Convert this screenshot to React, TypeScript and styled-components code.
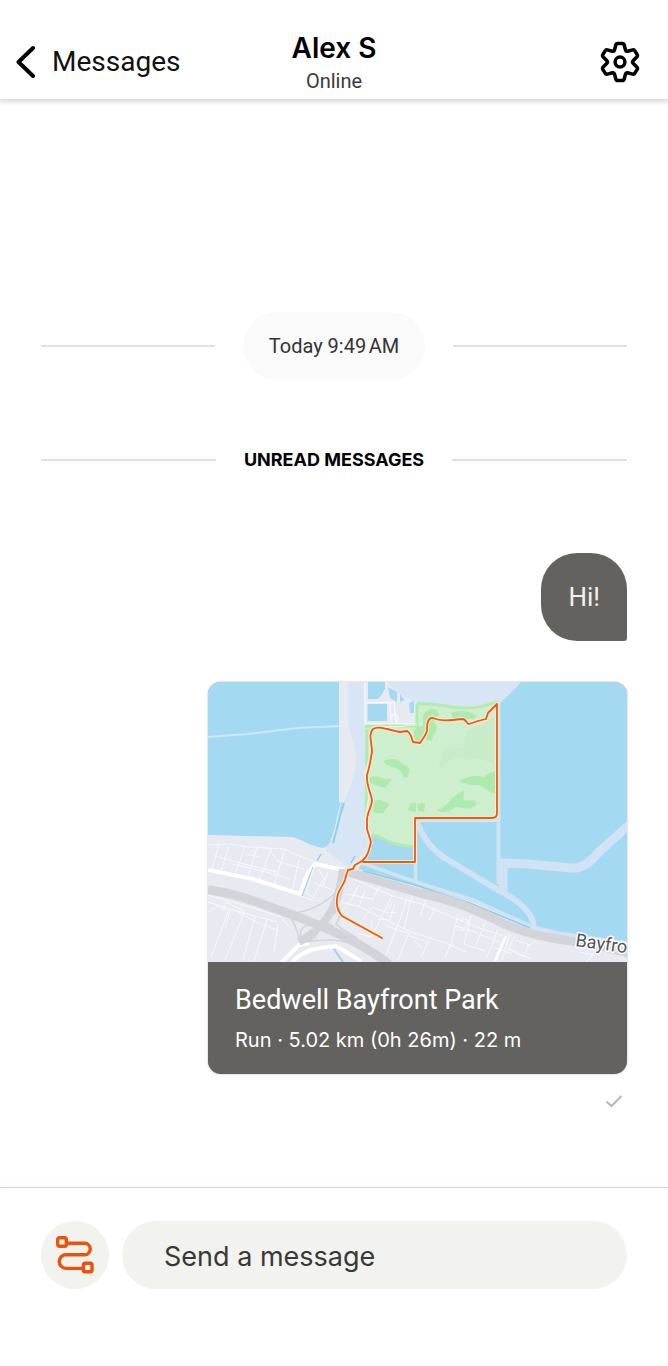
import React from "react";
import styled, { createGlobalStyle } from "styled-components";

const GlobalStyle = createGlobalStyle`
  *, *::before, *::after { box-sizing: border-box; }
  body {
    margin: 0;
    background: #fff;
    color: #000;
    font-family: Roboto, Inter, "Liberation Sans", sans-serif;
  }
  button, input { font-family: inherit; }
`;

const Screen = styled.div`
  display: flex;
  flex-direction: column;
  min-height: 100vh;
`;

const Header = styled.header`
  display: grid;
  grid-template-columns: 1fr auto 1fr;
  align-items: center;
  padding: 32px 16px 4px;
  background: #fff;
  box-shadow: 0 1px 6px 1px rgba(0, 0, 0, 0.2);
`;

const BackLink = styled.a`
  display: flex;
  align-items: center;
  gap: 16px;
  justify-self: start;
  margin-bottom: 4px;
  color: #111;
  font-size: 28px;
  line-height: 32px;
  text-decoration: none;
`;

const Person = styled.div`
  text-align: center;
`;

const Name = styled.h1`
  margin: 0;
  font-family: Inter, sans-serif;
  font-size: 28px;
  font-weight: 600;
  line-height: 32px;
`;

const Status = styled.p`
  margin: 3px 0 0;
  color: #3a3a3a;
  font-size: 20px;
  line-height: 28px;
`;

const IconButton = styled.button`
  display: flex;
  justify-self: end;
  margin: 0 0 4px;
  padding: 0 12px;
  border: 0;
  background: none;
  cursor: pointer;
`;

const Thread = styled.main`
  display: flex;
  flex: 1;
  flex-direction: column;
  padding: 213px 41px 76px;
`;

const Divider = styled.div`
  display: flex;
  align-items: center;
  gap: 28px;

  &::before, &::after {
    content: "";
    flex: 1;
    height: 2px;
    background: #e0e0e0;
  }
`;

const DatePill = styled.time`
  padding: 20px 26px;
  border-radius: 34px;
  background: #fafafa;
  color: #333;
  font-size: 20px;
  line-height: 28px;
`;

const UnreadLabel = styled.h2`
  margin: 68px 0;
  font-family: Inter, sans-serif;
  font-size: 18px;
  font-weight: 700;
  line-height: 24px;
`;

const Bubble = styled.p`
  align-self: flex-end;
  margin: 13px 0 0;
  padding: 28px 27px;
  border-radius: 36px 36px 3px 36px;
  background: #64625e;
  color: #f2f2f0;
  font-size: 26px;
  line-height: 32px;
`;

const ActivityCard = styled.a`
  align-self: flex-end;
  width: 419px;
  max-width: 100%;
  margin-top: 41px;
  overflow: hidden;
  border-radius: 13px;
  background: #64625e;
  box-shadow: 0 0 2px rgba(0, 0, 0, 0.35);
  color: #fff;
  text-decoration: none;
`;

const MapArt = styled.svg`
  display: block;
  width: 100%;
  height: auto;
`;

const ActivityText = styled.div`
  padding: 20px 27px 18px;
`;

const ActivityTitle = styled.h3`
  margin: 0;
  font-size: 27px;
  font-weight: 400;
  line-height: 36px;
`;

const ActivityStats = styled.p`
  margin: 6px 0 0;
  font-family: Inter, sans-serif;
  font-size: 20px;
  line-height: 32px;
`;

const SentMark = styled.svg`
  align-self: flex-end;
  margin: 20px 4px 0 0;
`;

const Composer = styled.form`
  display: flex;
  gap: 13px;
  padding: 33px 41px 77px;
  border-top: 1px solid #d6d6d6;
  box-shadow: 0 -2px 12px rgba(0, 0, 0, 0.03);
`;

const RouteButton = styled.button`
  display: grid;
  place-items: center;
  flex: none;
  width: 68px;
  height: 68px;
  padding: 0;
  border: 0;
  border-radius: 50%;
  background: #f2f2ef;
  cursor: pointer;
`;

const MessageInput = styled.input`
  flex: 1;
  min-width: 0;
  height: 68px;
  padding: 2px 42px 0;
  border: 0;
  border-radius: 34px;
  background: #f2f2ef;
  color: #333;
  font-family: Inter, sans-serif;
  font-size: 27px;

  &::placeholder { color: #383836; opacity: 1; }
`;

function BackIcon() {
  return (
    <svg width="20" height="34" viewBox="0 0 20 34" fill="none" stroke="#000" strokeWidth="4" strokeLinecap="round" strokeLinejoin="round" aria-hidden="true">
      <path d="M17 3L2.5 17L17 31" />
    </svg>
  );
}

function GearIcon() {
  return (
    <svg width="40" height="42" viewBox="-20 -21 40 42" fill="none" stroke="#000" strokeWidth="3.5" strokeLinejoin="round" aria-hidden="true">
      <path d="M-5.5 -12L-4.2 -17Q-3.8 -18.5 -2.3 -18.5H2.3Q3.8 -18.5 4.2 -17L5.5 -12Q5.9 -10.4 7.6 -10.8L12.6 -12.1Q14.1 -12.5 14.9 -11.2L17.2 -7.3Q17.9 -6 16.8 -4.9L13.1 -1.2Q12 0 13.1 1.2L16.8 4.9Q17.9 6 17.2 7.3L14.9 11.2Q14.1 12.5 12.6 12.1L7.6 10.8Q5.9 10.4 5.5 12L4.2 17Q3.8 18.5 2.3 18.5H-2.3Q-3.8 18.5 -4.2 17L-5.5 12Q-5.9 10.4 -7.6 10.8L-12.6 12.1Q-14.1 12.5 -14.9 11.2L-17.2 7.3Q-17.9 6 -16.8 4.9L-13.1 1.2Q-12 0 -13.1 -1.2L-16.8 -4.9Q-17.9 -6 -17.2 -7.3L-14.9 -11.2Q-14.1 -12.5 -12.6 -12.1L-7.6 -10.8Q-5.9 -10.4 -5.5 -12Z" />
      <circle r="4.9" />
    </svg>
  );
}

function RouteIcon() {
  return (
    <svg width="40" height="40" viewBox="0 0 40 40" fill="none" stroke="#ec520b" strokeWidth="3.4" aria-hidden="true">
      <rect x="2.700" y="2.700" width="8.600" height="8.600" rx="1.800" />
      <rect x="28.400" y="28.200" width="8.600" height="8.600" rx="1.800" />
      <path d="M12 8.300H29.500A5.700 5.700 0 0 1 29.500 19.800H11A6.800 6.800 0 0 0 11 33.400H28" />
    </svg>
  );
}

const RUN_PATH =
  "M174 256L134 234Q128 227 129 218C129 209 134 206 137 198Q138 193 140 188L145 187L147 183L154 179C161 173 161 167 163 160L159 147L159 138C159 130 164 125 164 118C162 108 158 102 159 93C162 84 162 80 164 70C164 61 160 52 165 47C170 44 174 46 179 47C188 49 190 50 192 50L199 49C203 51 203 54 205 60L212 61C214 58 217 55 219 49C219 41 220 35 225 36C232 39 239 39 254 37C259 37 258 42 261 42L270 39L278 37L280 31L289 22V131Q289 136 284 136H207V180H155";

function RouteMap() {
  return (
    <MapArt viewBox="0 0 419 280" role="img" aria-label="Route map">
      <rect width="419" height="280" fill="#e8eaf2" />

      {/* water and tidal flats */}
      <path d="M140 0H157V100L160 168L140 185L117 168L126 145L136 120C144 102 148 88 148 73C146 56 140 50 140 35Z" fill="#d8e5f5" />
      <path d="M0 0H131V120L136 121C131 130 129 140 126 148C123 159 120 166 114 166C100 163 93 157 84 155L0 153Z" fill="#a3daf1" />
      <path d="M0 55L40 52L90 46L131 44" fill="none" stroke="#d3e4f5" strokeWidth="2" />
      <path d="M133 121C130 130 128 146 124 158" fill="none" stroke="#e1ebf7" strokeWidth="1" />
      <path d="M136 121L132 134L128 150L125 161" fill="none" stroke="#8ed0e6" strokeWidth="2" />
      <path d="M179 0H312L292 20L255 25L209 21L197 15L184 6Z" fill="#d8e5f5" />
      <path d="M160 0H177V7L173 14L170 17H160ZM159.500 22H179V39H159.500ZM180 5L189 10V20L182 16ZM192 12L197 18L192 20ZM201 21L206 19V31L202 31Z" fill="#a3daf1" />
      <path d="M157 0V43M157 20.500H186L188 42M182 21L183 41M183 36Q188 28 190 37L188 42M157 42H208" fill="none" stroke="#f7f8fb" strokeWidth="1.300" />
      <path d="M312 0H419V259L362 254L330 246L265 220L209 203L150 187L162 170V140H290V22Z" fill="#a3daf1" />
      <g fill="none" stroke="#d0e2f4">
        <path d="M290.500 20V202" strokeWidth="4" />
        <path d="M207.500 137V200" strokeWidth="3.500" />
        <path d="M207 138H289" strokeWidth="3" />
        <path d="M209 140C216 158 225 169 240 178L285 205C302 214 325 226 326 246" strokeWidth="6" />
        <path d="M292 181L320 182L363 186C378 187 385 176 392 169L421 143" strokeWidth="9" strokeLinejoin="round" />
        <path d="M295 180V210" strokeWidth="9" />
        <path d="M154 181L208 200L265 218L325 245L350 251L419 261" strokeWidth="3.500" />
      </g>
      <path d="M312 0L290 22" stroke="#d8e5f5" strokeWidth="2" />
      <path d="M155 189L207 203L262 221L322 246M109 179L113 172M143 181L147 174" fill="none" stroke="#8fcde5" strokeWidth="1.500" />

      {/* park */}
      <path d="M157 43H209V20C228 18 240 25 255 25C269 25 282 22 290 19V136H207V166C197 164 194 162 188 161C178 162 172 153 162 153L158 138Z" fill="#cdefcd" />
      <path d="M209 22C228 20 240 26 255 26C269 27 280 23 289 20M157 44H209V22M159 47L158 136M164 153C173 153 179 161 188 162L205 165" fill="none" stroke="#b3eab2" strokeWidth="3" />
      <path d="M258 50L286 36V82L270 76L259 78C255 71 247 76 240 80L230 88L235 65L255 66Z" fill="#c8ebc9" />
      <g fill="#aee9ad">
        <path d="M175 80C180 76 190 76 194 81C200 86 204 84 200 95L195 96C196 85 185 88 175 80Z" />
        <path d="M162 95C172 93 174 98 184 97L178 105C174 107 168 102 162 101Z" />
        <path d="M165 120C171 115 176 119 181 122L175 131H166Z" />
        <path d="M215 33C222 23 231 27 231 34L224 36L229 46L223 59L217 57L210 61Q202 52 209 45L215 44Z" />
        <path d="M243 31C252 27 264 30 269 34L265 37H245Z" />
        <path d="M251 99C260 94 270 93 276 95C280 91 284 90 288 89V112C280 111 277 104 270 103C265 103 259 103 251 99Z" />
        <path d="M229 127C238 129 242 113 256 109C256 117 251 120 266 118L269 121C263 131 253 124 247 125C240 131 233 132 229 127Z" />
        <path d="M209 122L217 121L216 130L210 129ZM202 122L208 120V130L200 128Z" />
      </g>
      <path d="M209 43H199C193 47 174 42 165 47C160 52 164 68 161 78L157 91L161 115L157 137L161 157" fill="none" stroke="#eaf7e9" strokeWidth="1.200" />

      {/* local streets */}
      <g fill="none" stroke="#f9f9fc" strokeWidth="1">
        <path d="M0 163L22 162L42 165L75 167L108 181M11 162L4 187M21 164L13 189M37 164L28 190M49 166L40 195M63 167L52 197M76 170L66 203M91 177L84 211M7 174L40 183L69 190M38 172L51 175M25 182L46 187M47 187L83 197M68 179L96 187M62 169L71 180" />
        <path d="M0 213L35 223L73 235L80 244M0 220L25 228L69 240M0 230L9 224L22 229L17 246M20 230L3 275M36 231L17 278M47 235L35 278M59 238L46 279M70 242L66 270M30 230L50 241L69 248M14 228L18 220L36 229" />
        <path d="M105 188L98 211L116 222L126 209M111 188L116 196L106 214M120 190L115 204L124 208M107 201L115 205M93 214L106 219" />
        <path d="M145 197L182 213L213 222L274 247L295 254M134 220L152 225L178 238L203 250L235 260L258 270M135 228L142 220L151 203M151 225L157 208M164 218L174 200M184 214L175 232L165 252M199 216L194 232L176 278M155 238L164 225L180 231L189 230M170 237L182 238L187 222M178 244L201 251L190 278M164 238L163 255L149 251M202 254L220 260L213 276M204 213L196 247M213 266L206 258M139 212L164 217M181 226L184 220" />
        <path d="M218 218L212 234M228 225L221 238M250 232L244 258L237 276M263 234L256 262L277 269M277 241L267 265M290 247L279 276M302 252L294 278M307 254L301 266L316 275L321 262M307 258L322 263L328 258M248 244L270 251L259 248M253 236L262 239L254 249L248 247M286 265L304 272M273 253L292 260M300 267L323 277M371 270L385 273L378 280" />
      </g>

      {/* arterial roads */}
      <g fill="none" stroke="#fff" strokeWidth="4" strokeLinejoin="round">
        <path d="M0 188L45 197L92 212L99 192L107 182L136 188" />
        <path d="M73 281L91 263L101 261M84 280C97 267 109 266 128 264L153 279" />
        <path d="M298 254L287 279" strokeWidth="2.500" />
      </g>
      <path d="M94 214L105 185" stroke="#9dcfe2" strokeWidth="1" />
      <g fill="none" stroke="#d2d4da">
        <path d="M0 208C30 211 58 224 85 233C116 245 146 256 181 282" strokeWidth="9" />
        <path d="M135 187C132 211 127 240 91 260" strokeWidth="8" />
        <path d="M140 190L212 211C253 220 271 230 299 243C326 255 355 258 384 262L421 271" strokeWidth="9" />
        <path d="M73 232C99 232 117 222 129 209M81 235C89 240 88 253 94 260C89 248 96 241 105 244M126 232C133 223 133 235 128 242C136 251 152 252 157 270M109 247C110 258 103 257 96 260C120 257 136 255 157 269M126 244C114 242 119 229 127 229" strokeWidth="1.500" />
      </g>
      <path d="M126 267L135 280" stroke="#9dd2e9" strokeWidth="2" />

      {/* recorded run */}
      <g fill="none" strokeLinejoin="round" strokeLinecap="round">
        <path d={RUN_PATH} stroke="#fbecc9" strokeWidth="4" />
        <path d={RUN_PATH} stroke="#e65a1c" strokeWidth="1.800" />
      </g>

      <text x="367" y="264" transform="rotate(8 367 264)" fontFamily="Roboto, sans-serif" fontSize="18" fill="#555" stroke="#fff" strokeWidth="3" strokeLinejoin="round" paintOrder="stroke">Bayfro</text>
    </MapArt>
  );
}

export default function App() {
  return (
    <>
      <GlobalStyle />
      <Screen>
        <Header>
          <BackLink href="#messages">
            <BackIcon />
            Messages
          </BackLink>
          <Person>
            <Name>Alex S</Name>
            <Status>Online</Status>
          </Person>
          <IconButton type="button" aria-label="Settings">
            <GearIcon />
          </IconButton>
        </Header>

        <Thread>
          <Divider>
            <DatePill>Today 9:49{"\u202f"}AM</DatePill>
          </Divider>
          <Divider>
            <UnreadLabel>UNREAD MESSAGES</UnreadLabel>
          </Divider>
          <Bubble>Hi!</Bubble>
          <ActivityCard href="#activity">
            <RouteMap />
            <ActivityText>
              <ActivityTitle>Bedwell Bayfront Park</ActivityTitle>
              <ActivityStats>Run · 5.02 km (0h 26m) · 22 m</ActivityStats>
            </ActivityText>
          </ActivityCard>
          <SentMark width="18" height="14" viewBox="0 0 18 14" fill="none" stroke="#b8b8b8" strokeWidth="2" role="img" aria-label="Sent">
            <path d="M1.500 7.500L6.500 12L16.500 2" />
          </SentMark>
        </Thread>

        <Composer>
          <RouteButton type="button" aria-label="Share a route">
            <RouteIcon />
          </RouteButton>
          <MessageInput type="text" aria-label="Send a message" placeholder="Send a message" />
        </Composer>
      </Screen>
    </>
  );
}
